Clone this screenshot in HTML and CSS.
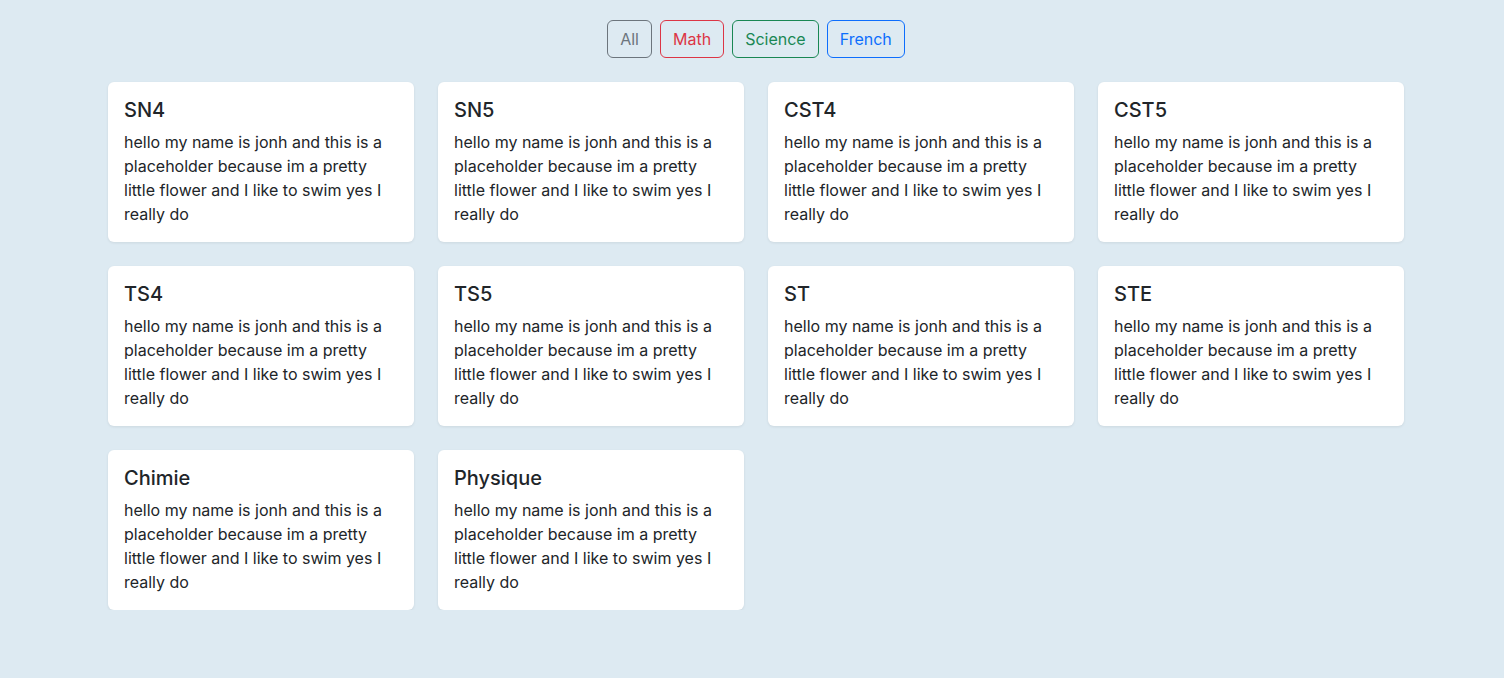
FILE: index.html
```html
<!DOCTYPE html>
<html lang="en">
<head>
<meta charset="utf-8">
<title>Courses</title>
<link rel="stylesheet" href="styles.css">
</head>
<body>
<div class="page">
  <div class="filters">
    <button class="btn btn-all">All</button>
    <button class="btn btn-math">Math</button>
    <button class="btn btn-science">Science</button>
    <button class="btn btn-french">French</button>
  </div>
  <div class="grid">
    <div class="card"><h5 class="card-title">SN4</h5><p class="card-text">hello my name is jonh and this is a placeholder because im a pretty little flower and I like to swim yes I really do</p></div>
    <div class="card"><h5 class="card-title">SN5</h5><p class="card-text">hello my name is jonh and this is a placeholder because im a pretty little flower and I like to swim yes I really do</p></div>
    <div class="card"><h5 class="card-title">CST4</h5><p class="card-text">hello my name is jonh and this is a placeholder because im a pretty little flower and I like to swim yes I really do</p></div>
    <div class="card"><h5 class="card-title">CST5</h5><p class="card-text">hello my name is jonh and this is a placeholder because im a pretty little flower and I like to swim yes I really do</p></div>
    <div class="card"><h5 class="card-title">TS4</h5><p class="card-text">hello my name is jonh and this is a placeholder because im a pretty little flower and I like to swim yes I really do</p></div>
    <div class="card"><h5 class="card-title">TS5</h5><p class="card-text">hello my name is jonh and this is a placeholder because im a pretty little flower and I like to swim yes I really do</p></div>
    <div class="card"><h5 class="card-title">ST</h5><p class="card-text">hello my name is jonh and this is a placeholder because im a pretty little flower and I like to swim yes I really do</p></div>
    <div class="card"><h5 class="card-title">STE</h5><p class="card-text">hello my name is jonh and this is a placeholder because im a pretty little flower and I like to swim yes I really do</p></div>
    <div class="card"><h5 class="card-title">Chimie</h5><p class="card-text">hello my name is jonh and this is a placeholder because im a pretty little flower and I like to swim yes I really do</p></div>
    <div class="card"><h5 class="card-title">Physique</h5><p class="card-text">hello my name is jonh and this is a placeholder because im a pretty little flower and I like to swim yes I really do</p></div>
  </div>
</div>
</body>
</html>
```
FILE: styles.css
```css
* { box-sizing: border-box; }
html, body { margin: 0; }
body {
  background: #ddeaf2;
  font-family: Inter, "Liberation Sans", sans-serif;
  font-size: 16px;
  line-height: 1.5;
  color: #212529;
}
.page {
  padding: 20px 0 0 8px;
}
.filters {
  display: flex;
  justify-content: center;
  gap: 8px;
}
.btn {
  font-family: inherit;
  font-size: 16px;
  line-height: 24px;
  padding: 6px 12px;
  background: transparent;
  border: 1px solid;
  border-radius: 6px;
  cursor: pointer;
}
.btn-all { color: #6c757d; border-color: #6c757d; }
.btn-math { color: #dc3545; border-color: #dc3545; }
.btn-science { color: #198754; border-color: #198754; }
.btn-french { color: #0d6efd; border-color: #0d6efd; }
.grid {
  width: 1296px;
  margin: 24px auto 0;
  display: grid;
  grid-template-columns: repeat(4, 306px);
  gap: 24px;
}
.card {
  background: #fff;
  border-radius: 6px;
  padding: 16px;
  box-shadow: 0 1px 3px rgba(0, 0, 0, 0.08);
}
.card-title {
  margin: 0 0 8px;
  font-size: 20px;
  font-weight: 500;
  line-height: 1.2;
}
.card-text {
  margin: 0;
}
```
